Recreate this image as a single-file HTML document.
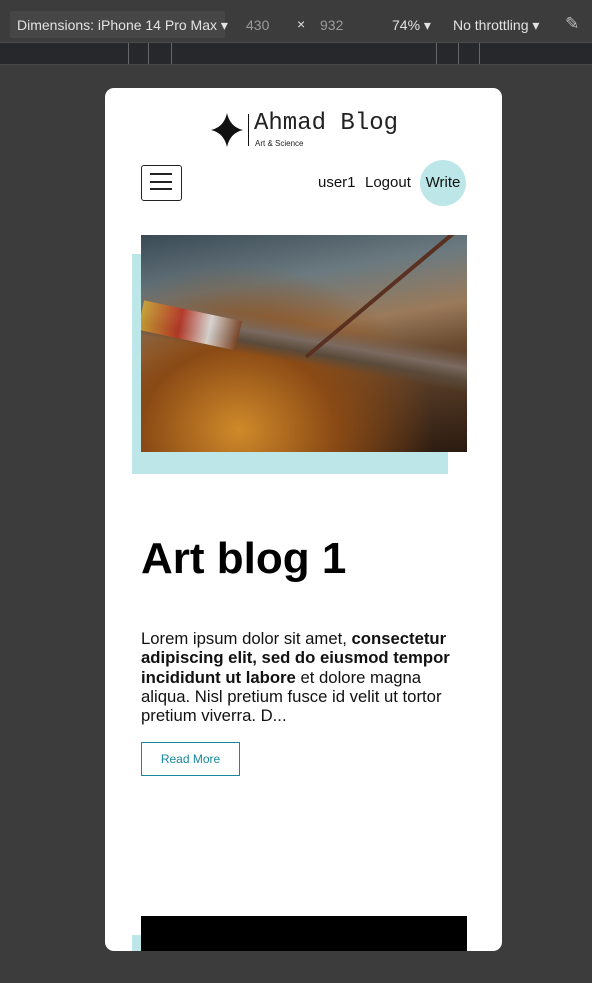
<!DOCTYPE html>
<html><head><style>
body{margin:0;width:592px;height:983px;background:#3c3c3c;position:relative;overflow:hidden;font-family:"Liberation Sans",sans-serif}
.tb{position:absolute;left:0;top:0;width:592px;height:42px;background:#3c3c3c;color:#e3e3e3;font-size:14px}
.ruler{position:absolute;left:0;top:42px;width:592px;height:23px;background:#27282b;border-top:1px solid #4a4a4a;border-bottom:1px solid #4a4a4a;box-sizing:border-box}
.ruler i{position:absolute;top:0;width:1px;height:21px;background:#666}
.card{position:absolute;left:105px;top:88px;width:397px;height:863px;background:#fff;border-radius:9px;overflow:hidden}
.a{position:absolute}
</style></head><body>
<div class="tb">
<div class="a" style="left:10px;top:11px;width:215px;height:27px;background:#464646;border-radius:2px"></div>
<div class="a" style="left:17px;top:17px">Dimensions: iPhone 14 Pro Max ▾</div>
<div class="a" style="left:246px;top:17px;color:#9a9a9a">430</div>
<div class="a" style="left:297px;top:16px">×</div>
<div class="a" style="left:320px;top:17px;color:#9a9a9a">932</div>
<div class="a" style="left:392px;top:17px">74% ▾</div>
<div class="a" style="left:453px;top:17px">No throttling ▾</div>
<div class="a" style="left:565px;top:14px;font-size:17px;color:#bbb">✎</div>
</div>
<div class="ruler"><i style="left:128px"></i><i style="left:148px"></i><i style="left:171px"></i><i style="left:436px"></i><i style="left:458px"></i><i style="left:479px"></i></div>
<div class="card">
<svg class="a" style="left:106px;top:25px" width="32" height="34" viewBox="0 0 32 34"><path d="M16 0 Q19 14 32 17 Q19 20 16 34 Q13 20 0 17 Q13 14 16 0Z" fill="#111"/></svg>
<div class="a" style="left:143px;top:26px;width:1px;height:32px;background:#111"></div>
<div class="a" style="left:149px;top:22px;font-family:'Liberation Mono',monospace;font-size:24px;color:#222">Ahmad Blog</div>
<div class="a" style="left:150px;top:51px;font-size:8px;color:#222">Art &amp; Science</div>
<div class="a" style="left:36px;top:77px;width:39px;height:34px;border:1px solid #222;border-radius:3px"></div>
<div class="a" style="left:45px;top:85px;width:22px;height:2px;background:#222"></div>
<div class="a" style="left:45px;top:93px;width:22px;height:2px;background:#222"></div>
<div class="a" style="left:45px;top:100px;width:22px;height:2px;background:#222"></div>
<div class="a" style="left:213px;top:86px;font-size:15px;color:#111">user1</div>
<div class="a" style="left:260px;top:86px;font-size:15px;color:#111">Logout</div>
<div class="a" style="left:315px;top:72px;width:46px;height:46px;border-radius:50%;background:#bde6e8;font-size:15px;line-height:46px;text-align:center;color:#111">Write</div>
<div class="a" style="left:27px;top:166px;width:316px;height:220px;background:#bde6e8"></div>
<div class="a" style="left:36px;top:147px;width:326px;height:217px;overflow:hidden;background:radial-gradient(ellipse at 30% 90%,#d08a2a 0%,#8a4a15 30%,transparent 60%),linear-gradient(170deg,#3a4a55 0%,#6b7a80 25%,#9a7a5a 45%,#6a4a30 60%,#2a1a10 100%)">
<div class="a" style="left:0;top:60px;width:340px;height:40px;background:linear-gradient(180deg,transparent,#7a6a60 40%,#5a4a3a 70%,transparent);transform:rotate(10deg);transform-origin:left"></div>
<div class="a" style="left:0;top:65px;width:100px;height:30px;background:linear-gradient(90deg,#d8b030,#c03020 40%,#eee 70%,#7a4020);transform:rotate(12deg);transform-origin:left;opacity:.8"></div>
<div class="a" style="left:165px;top:120px;width:200px;height:4px;background:#5a3020;transform:rotate(-40deg);transform-origin:left"></div>
</div>
<div class="a" style="left:36px;top:446px;font-size:44px;font-weight:bold;color:#000">Art blog 1</div>
<div class="a" style="left:36px;top:541px;width:330px;font-size:16.7px;line-height:19.3px;color:#111">Lorem ipsum dolor sit amet, <b>consectetur adipiscing elit, sed do eiusmod tempor incididunt ut labore</b> et dolore magna aliqua. Nisl pretium fusce id velit ut tortor pretium viverra. D...</div>
<div class="a" style="left:36px;top:654px;width:97px;height:32px;border:1px solid #17899a;color:#17899a;font-size:12px;line-height:33px;text-align:center">Read More</div>
<div class="a" style="left:27px;top:847px;width:20px;height:30px;background:#bde6e8"></div>
<div class="a" style="left:36px;top:828px;width:326px;height:50px;background:#000"></div>
</div>
</body></html>
